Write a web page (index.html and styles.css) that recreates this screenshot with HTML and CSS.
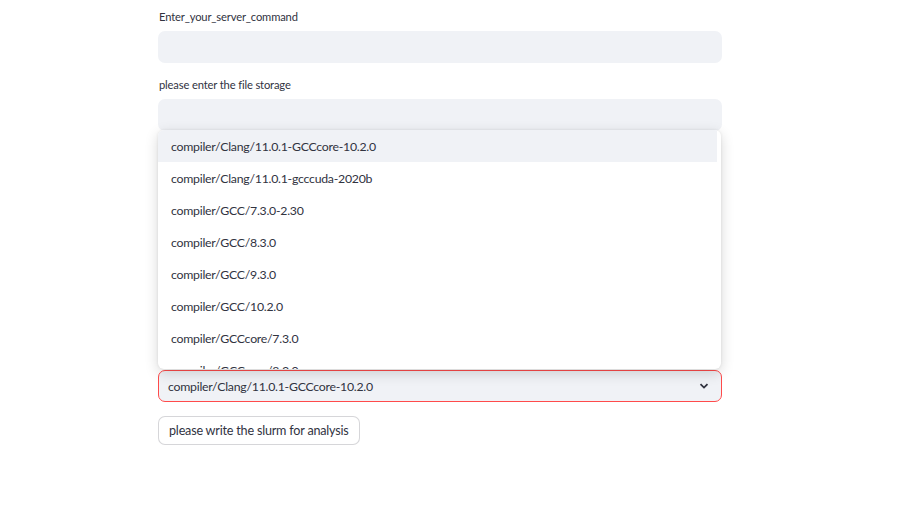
FILE: index.html
```html
<!DOCTYPE html>
<html>
<head>
<meta charset="utf-8">
<link rel="stylesheet" href="styles.css">
</head>
<body>
<main class="page">
  <div class="widget">
    <label class="label">Enter_your_server_command</label>
    <div class="input"></div>
  </div>
  <div class="widget">
    <label class="label">please enter the file storage</label>
    <div class="input"></div>
  </div>
  <div class="spacer"></div>
  <div class="select-wrap">
    <div class="menu">
      <ul class="options">
        <li class="option active">compiler/Clang/11.0.1-GCCcore-10.2.0</li>
        <li class="option">compiler/Clang/11.0.1-gcccuda-2020b</li>
        <li class="option">compiler/GCC/7.3.0-2.30</li>
        <li class="option">compiler/GCC/8.3.0</li>
        <li class="option">compiler/GCC/9.3.0</li>
        <li class="option">compiler/GCC/10.2.0</li>
        <li class="option">compiler/GCCcore/7.3.0</li>
        <li class="option">compiler/GCCcore/8.3.0</li>
        <li class="option">compiler/GCCcore/9.3.0</li>
      </ul>
    </div>
    <div class="select">
      <span class="select-value">compiler/Clang/11.0.1-GCCcore-10.2.0</span>
      <svg class="chevron" width="12" height="12" viewBox="0 0 12 12"><path d="M2.5 4.2 L6 7.6 L9.5 4.2" fill="none" stroke="#31333f" stroke-width="1.8"/></svg>
    </div>
  </div>
  <div class="button-row">
    <button class="button">please write the slurm for analysis</button>
  </div>
</main>
</body>
</html>
```
FILE: styles.css
```css
html, body {
  margin: 0;
  padding: 0;
  background: #ffffff;
}
body {
  font-family: "Lato", "Noto Sans", sans-serif;
  color: #31333f;
  width: 912px;
  height: 508px;
  overflow: hidden;
}
.page {
  display: flex;
  flex-direction: column;
  gap: 14px;
  margin-left: 158px;
  width: 564px;
  padding-top: 9px;
}
.widget {
  display: flex;
  flex-direction: column;
  gap: 6px;
}
.label {
  font-size: 11.2px;
  letter-spacing: -0.15px;
  line-height: 16px;
  height: 16px;
  padding-left: 1px;
}
.input {
  height: 32px;
  background: #f0f2f6;
  border-radius: 7px;
}
.spacer {
  height: 211px;
}
.select-wrap {
  position: relative;
}
.menu {
  position: absolute;
  left: 0;
  bottom: calc(100% + 1px);
  width: 563px;
  height: 239px;
  background: #ffffff;
  border-radius: 6px;
  box-shadow: 0 4px 14px rgba(0, 0, 0, 0.16), 0 0 3px rgba(0, 0, 0, 0.08);
  overflow: hidden;
  z-index: 2;
}
.options {
  list-style: none;
  margin: 0;
  padding: 0;
  width: 559px;
}
.option {
  height: 32px;
  line-height: 33px;
  padding-left: 13px;
  font-size: 12.3px;
  letter-spacing: -0.25px;
  white-space: nowrap;
}
.option.active {
  background: #f0f2f6;
}
.select {
  height: 30px;
  border: 1px solid #ff4b4b;
  border-radius: 7px;
  background: #f0f2f6;
  display: flex;
  align-items: center;
  justify-content: space-between;
  padding: 0 11px 0 9px;
}
.select-value {
  font-size: 12.3px;
  letter-spacing: -0.25px;
}
.chevron {
  display: block;
}
.button-row {
  display: flex;
}
.button {
  font-family: inherit;
  font-size: 12.6px;
  letter-spacing: -0.2px;
  color: #31333f;
  background: #ffffff;
  border: 1px solid rgba(49, 51, 63, 0.2);
  border-radius: 7px;
  height: 29px;
  padding: 0 10px;
}
```
